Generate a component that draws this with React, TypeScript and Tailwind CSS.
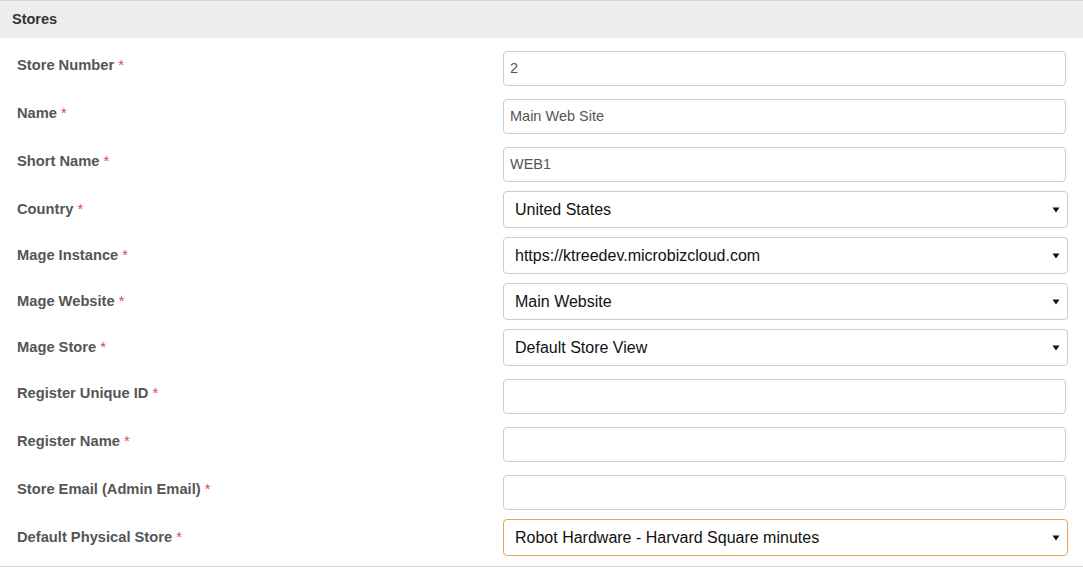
import React from 'react'

type Field = {
  label: string
  kind: 'text' | 'select'
  value?: string
  focused?: boolean
}

const fields: Field[] = [
  { label: 'Store Number', kind: 'text', value: '2' },
  { label: 'Name', kind: 'text', value: 'Main Web Site' },
  { label: 'Short Name', kind: 'text', value: 'WEB1' },
  { label: 'Country', kind: 'select', value: 'United States' },
  { label: 'Mage Instance', kind: 'select', value: 'https://ktreedev.microbizcloud.com' },
  { label: 'Mage Website', kind: 'select', value: 'Main Website' },
  { label: 'Mage Store', kind: 'select', value: 'Default Store View' },
  { label: 'Register Unique ID', kind: 'text', value: '' },
  { label: 'Register Name', kind: 'text', value: '' },
  { label: 'Store Email (Admin Email)', kind: 'text', value: '' },
  { label: 'Default Physical Store', kind: 'select', value: 'Robot Hardware - Harvard Square minutes', focused: true },
]

function Caret() {
  return (
    <svg width="8" height="6" viewBox="0 0 8 6" className="shrink-0">
      <path d="M0.5 0.5 H7.5 L4 5.5 Z" fill="#111" />
    </svg>
  )
}

function Row({ field }: { field: Field }) {
  if (field.kind === 'select') {
    return (
      <div className="flex mt-[9px]">
        <label className="w-[503px] shrink-0 pl-[17px] pt-[10px] text-[14.7px] leading-[16px] font-bold text-[#555]">
          {field.label} <span className="text-[#e0455a] font-normal">*</span>
        </label>
        <div
          className={
            field.focused
              ? 'flex-1 mr-[15px] h-[37px] flex items-center justify-between pl-[11px] pr-[7px] rounded-[4px] border border-[#eba654] bg-white'
              : 'flex-1 mr-[15px] h-[37px] flex items-center justify-between pl-[11px] pr-[7px] rounded-[4px] border border-[#cccccc] bg-white'
          }
        >
          <span className="text-[16px] text-[#111]">{field.value}</span>
          <Caret />
        </div>
      </div>
    )
  }
  return (
    <div className="flex mt-[13px]">
      <label className="w-[503px] shrink-0 pl-[17px] pt-[6px] text-[14.7px] leading-[16px] font-bold text-[#555]">
        {field.label} <span className="text-[#e0455a] font-normal">*</span>
      </label>
      <div className="flex-1 mr-[17px] h-[35px] flex items-center pl-[6px] rounded-[4px] border border-[#cccccc] bg-white">
        <span className="text-[14.5px] text-[#555]">{field.value}</span>
      </div>
    </div>
  )
}

export default function App() {
  return (
    <div className="w-[1083px] h-[573px] bg-white font-['Liberation_Sans',Arial,sans-serif]">
      <div className="border-t border-b border-[#d4d4d4] pb-[10px]">
        <div className="h-[37px] bg-[#eeeeee] flex items-center pl-[12px] text-[14.5px] font-bold text-[#333]">
          Stores
        </div>
        {fields.map((f) => (
          <Row key={f.label} field={f} />
        ))}
      </div>
    </div>
  )
}
